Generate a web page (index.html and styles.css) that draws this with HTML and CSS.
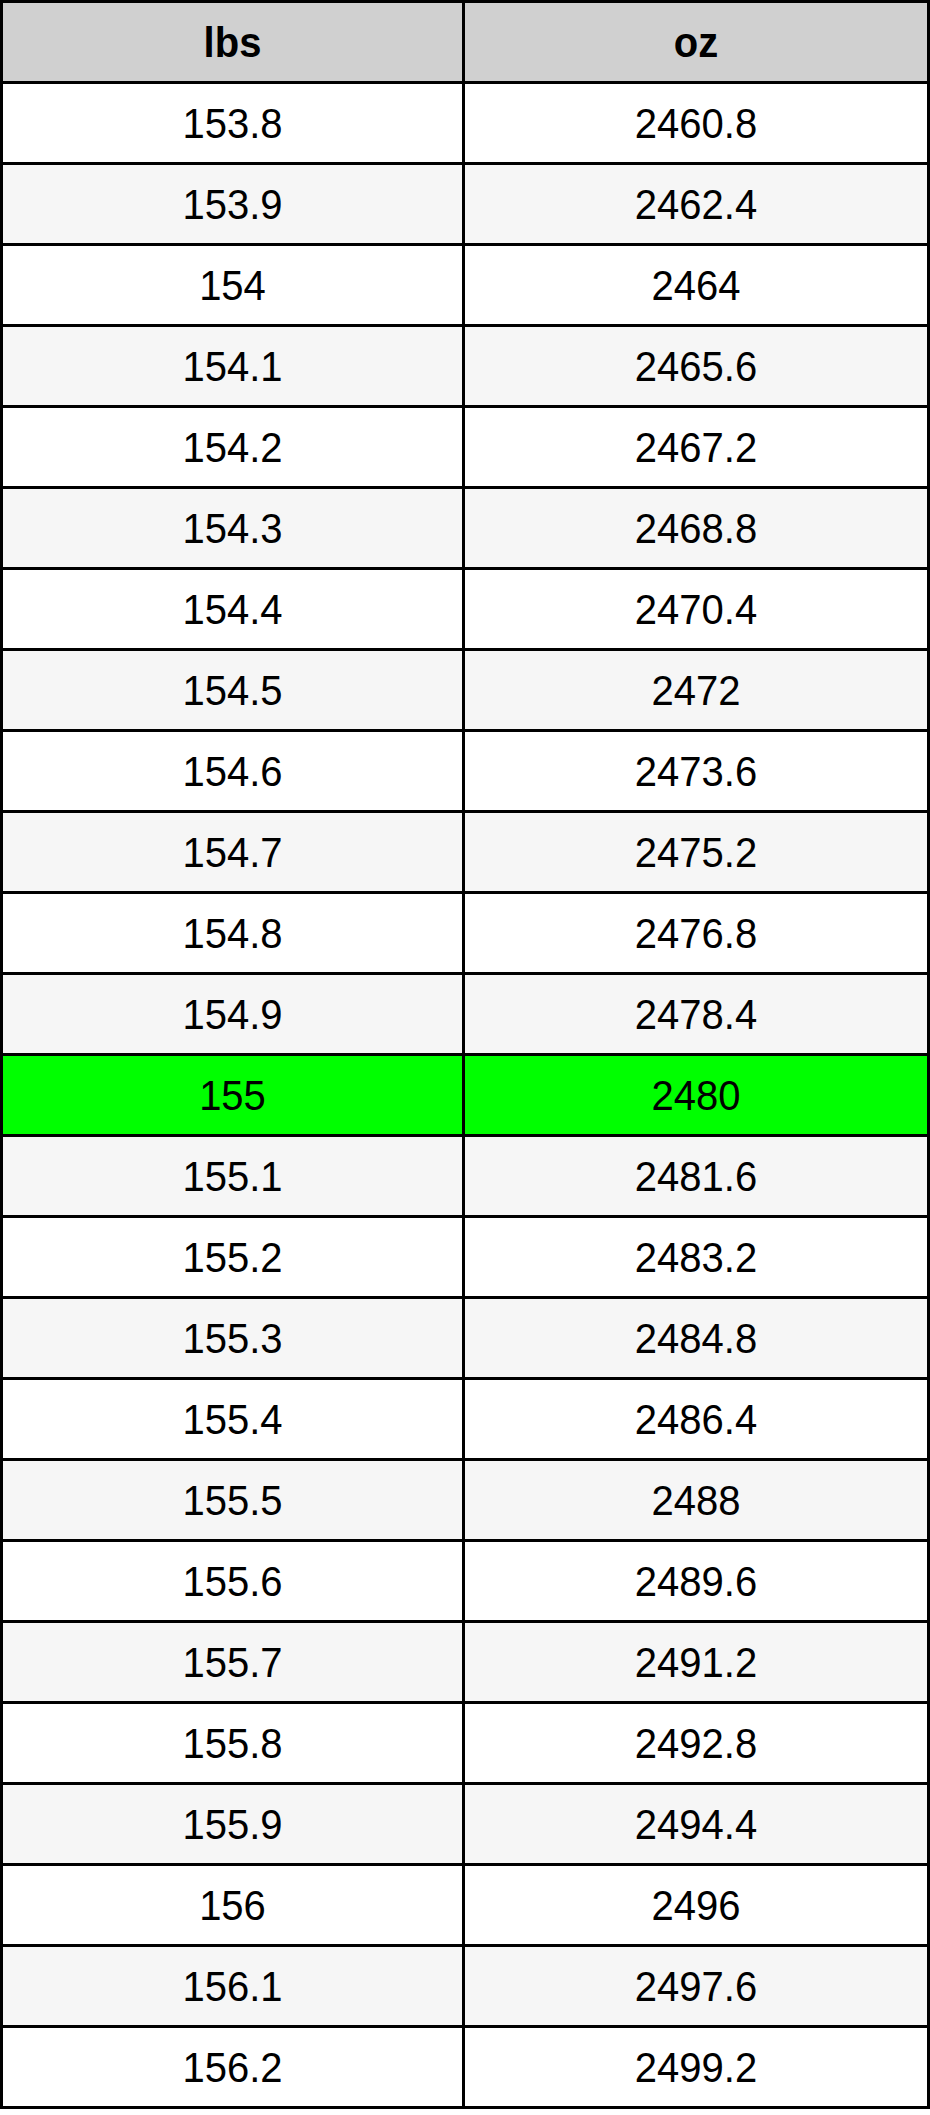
FILE: index.html
```html
<!DOCTYPE html>
<html>
<head>
<meta charset="utf-8">
<link rel="stylesheet" href="styles.css">
</head>
<body>
<div class="conv">
  <div class="cell head"><span>lbs</span></div><div class="cell head"><span>oz</span></div>
  <div class="cell"><span>153.8</span></div><div class="cell"><span>2460.8</span></div>
  <div class="cell alt"><span>153.9</span></div><div class="cell alt"><span>2462.4</span></div>
  <div class="cell"><span>154</span></div><div class="cell"><span>2464</span></div>
  <div class="cell alt"><span>154.1</span></div><div class="cell alt"><span>2465.6</span></div>
  <div class="cell"><span>154.2</span></div><div class="cell"><span>2467.2</span></div>
  <div class="cell alt"><span>154.3</span></div><div class="cell alt"><span>2468.8</span></div>
  <div class="cell"><span>154.4</span></div><div class="cell"><span>2470.4</span></div>
  <div class="cell alt"><span>154.5</span></div><div class="cell alt"><span>2472</span></div>
  <div class="cell"><span>154.6</span></div><div class="cell"><span>2473.6</span></div>
  <div class="cell alt"><span>154.7</span></div><div class="cell alt"><span>2475.2</span></div>
  <div class="cell"><span>154.8</span></div><div class="cell"><span>2476.8</span></div>
  <div class="cell alt"><span>154.9</span></div><div class="cell alt"><span>2478.4</span></div>
  <div class="cell hl"><span>155</span></div><div class="cell hl"><span>2480</span></div>
  <div class="cell alt"><span>155.1</span></div><div class="cell alt"><span>2481.6</span></div>
  <div class="cell"><span>155.2</span></div><div class="cell"><span>2483.2</span></div>
  <div class="cell alt"><span>155.3</span></div><div class="cell alt"><span>2484.8</span></div>
  <div class="cell"><span>155.4</span></div><div class="cell"><span>2486.4</span></div>
  <div class="cell alt"><span>155.5</span></div><div class="cell alt"><span>2488</span></div>
  <div class="cell"><span>155.6</span></div><div class="cell"><span>2489.6</span></div>
  <div class="cell alt"><span>155.7</span></div><div class="cell alt"><span>2491.2</span></div>
  <div class="cell"><span>155.8</span></div><div class="cell"><span>2492.8</span></div>
  <div class="cell alt"><span>155.9</span></div><div class="cell alt"><span>2494.4</span></div>
  <div class="cell"><span>156</span></div><div class="cell"><span>2496</span></div>
  <div class="cell alt"><span>156.1</span></div><div class="cell alt"><span>2497.6</span></div>
  <div class="cell"><span>156.2</span></div><div class="cell"><span>2499.2</span></div>
</div>
</body>
</html>
```
FILE: styles.css
```css
html, body {
  margin: 0;
  padding: 0;
  background: #ffffff;
}

.conv {
  display: grid;
  grid-template-columns: 462px 465px;
  width: 930px;
  box-sizing: border-box;
  border-top: 3px solid #000;
  border-left: 3px solid #000;
  font-family: "Liberation Sans", Arial, Helvetica, sans-serif;
  font-size: 40px;
  color: #000;
}

.cell {
  height: 78px;
  border-right: 3px solid #000;
  border-bottom: 3px solid #000;
  background: #ffffff;
  display: flex;
  align-items: center;
  justify-content: center;
}

.cell span {
  display: inline-block;
  transform: scaleY(1.08);
}

.head {
  background: #d0d0d0;
  font-weight: bold;
}

.alt {
  background: #f6f6f6;
}

.hl {
  background: #00ff00;
}
```
